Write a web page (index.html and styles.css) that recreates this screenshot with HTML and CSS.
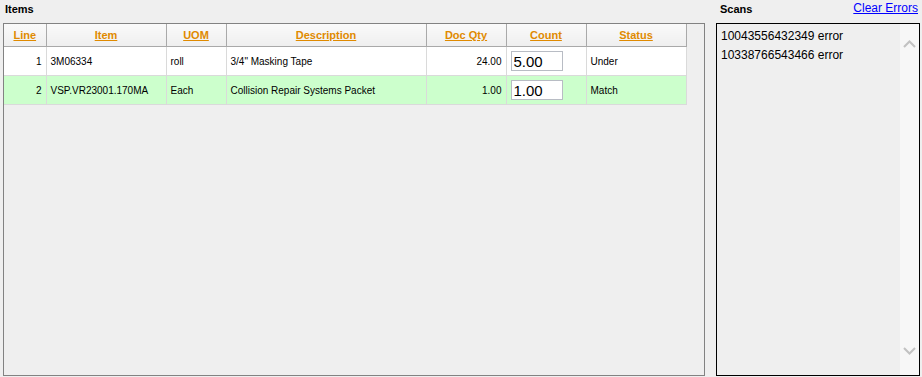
FILE: index.html
```html
<!DOCTYPE html>
<html lang="en">
<head>
    <meta charset="UTF-8">
    <meta name="viewport" content="width=device-width, initial-scale=1.0">
    <title>Count Items</title>
    <link rel="stylesheet" href="styles.css">
</head>
<body>
    <div class="page">
        <!-- Items grid -->
        <div class="items-column">
            <div class="section-title">Items</div>
            <div class="items-panel">
                <table class="item-table">
                    <colgroup>
                        <col style="width: 42px">
                        <col style="width: 120px">
                        <col style="width: 60px">
                        <col style="width: 200px">
                        <col style="width: 80px">
                        <col style="width: 80px">
                        <col style="width: 100px">
                    </colgroup>
                    <thead>
                        <tr>
                            <th><a href="#">Line</a></th>
                            <th><a href="#">Item</a></th>
                            <th><a href="#">UOM</a></th>
                            <th><a href="#">Description</a></th>
                            <th><a href="#">Doc Qty</a></th>
                            <th><a href="#">Count</a></th>
                            <th><a href="#">Status</a></th>
                        </tr>
                    </thead>
                    <tbody>
                        <tr>
                            <td class="num">1</td>
                            <td>3M06334</td>
                            <td>roll</td>
                            <td>3/4" Masking Tape</td>
                            <td class="num">24.00</td>
                            <td class="count-cell"><input class="count-input" type="text" value="5.00"></td>
                            <td>Under</td>
                        </tr>
                        <tr class="match">
                            <td class="num">2</td>
                            <td>VSP.VR23001.170MA</td>
                            <td>Each</td>
                            <td>Collision Repair Systems Packet</td>
                            <td class="num">1.00</td>
                            <td class="count-cell"><input class="count-input" type="text" value="1.00"></td>
                            <td>Match</td>
                        </tr>
                    </tbody>
                </table>
            </div>
        </div>

        <!-- Scans list -->
        <div class="scans-column">
            <div class="scans-head">
                <span class="section-title">Scans</span>
                <a class="clear-link" href="#">Clear Errors</a>
            </div>
            <div class="scans-box">
                <ul class="scan-list">
                    <li>10043556432349 error</li>
                    <li>10338766543466 error</li>
                </ul>
                <div class="scrollbar">
                    <svg width="13" height="8" viewBox="0 0 13 8"><path d="M1 7 L6.5 1.5 L12 7" fill="none" stroke="#c2c2c2" stroke-width="2"/></svg>
                    <svg width="13" height="8" viewBox="0 0 13 8"><path d="M1 1 L6.5 6.5 L12 1" fill="none" stroke="#c2c2c2" stroke-width="2"/></svg>
                </div>
            </div>
        </div>
    </div>
</body>
</html>
```

FILE: styles.css
```css
body {
    margin: 0;
    background-color: #efefef;
    font-family: Tahoma, "Liberation Sans", Arial, sans-serif;
    font-size: 11px;
    color: #000;
}

.page {
    display: flex;
    height: 377px;
    padding: 0 0 0 3px;
    box-sizing: border-box;
}

.section-title {
    font-weight: bold;
    font-size: 11px;
}

.items-column {
    width: 702px;
}

.items-column .section-title {
    height: 23px;
    padding: 3px 0 0 2px;
    box-sizing: border-box;
}

.items-panel {
    height: 353px;
    border: 1px solid #828282;
    box-sizing: border-box;
}

.item-table {
    border-collapse: collapse;
    table-layout: fixed;
    width: 682px;
}

.item-table th {
    height: 22px;
    padding: 0;
    border: 1px solid #a9a9a9;
    border-top: none;
    border-left-color: #dcdcdc;
    background: linear-gradient(#fafafa, #efefef);
    text-align: center;
}

.item-table th:first-child {
    border-left: none;
}

.item-table th a {
    color: #e08a00;
    font-weight: bold;
}

.item-table td {
    height: 28px;
    padding: 0 4px;
    border: 1px solid #dadada;
    background-color: #fff;
    white-space: nowrap;
    font-size: 10px;
}

.item-table td:first-child {
    border-left: none;
}

.item-table tr.match td {
    background-color: #ccffcc;
}

.item-table td.num {
    text-align: right;
    padding-right: 4px;
}

.item-table td.count-cell {
    padding: 0 4px;
}

.count-input {
    width: 52px;
    height: 20px;
    box-sizing: border-box;
    border: 1px solid #b8bcc4;
    padding: 0 2px;
    font-family: "Liberation Sans", Arial, sans-serif;
    font-size: 15px;
    background: #fff;
}

.scans-column {
    width: 204px;
    margin-left: 11px;
}

.scans-head {
    display: flex;
    justify-content: space-between;
    height: 23px;
    padding: 3px 2px 0 4px;
    box-sizing: border-box;
}

.clear-link {
    color: #0000ff;
    font-size: 12px;
    margin-top: -2px;
}

.scans-box {
    display: flex;
    height: 353px;
    border: 1px solid #000;
    box-sizing: border-box;
}

.scan-list {
    flex: 1;
    list-style: none;
    margin: 0;
    padding: 3px 0 0 4px;
    font-family: "Segoe UI", "Liberation Sans", Arial, sans-serif;
    font-size: 12px;
}

.scan-list li {
    height: 19px;
    line-height: 19px;
}

.scrollbar {
    width: 19px;
    background-color: #f7f7f7;
    display: flex;
    flex-direction: column;
    justify-content: space-between;
    align-items: center;
    padding: 16px 0 20px;
}
```
